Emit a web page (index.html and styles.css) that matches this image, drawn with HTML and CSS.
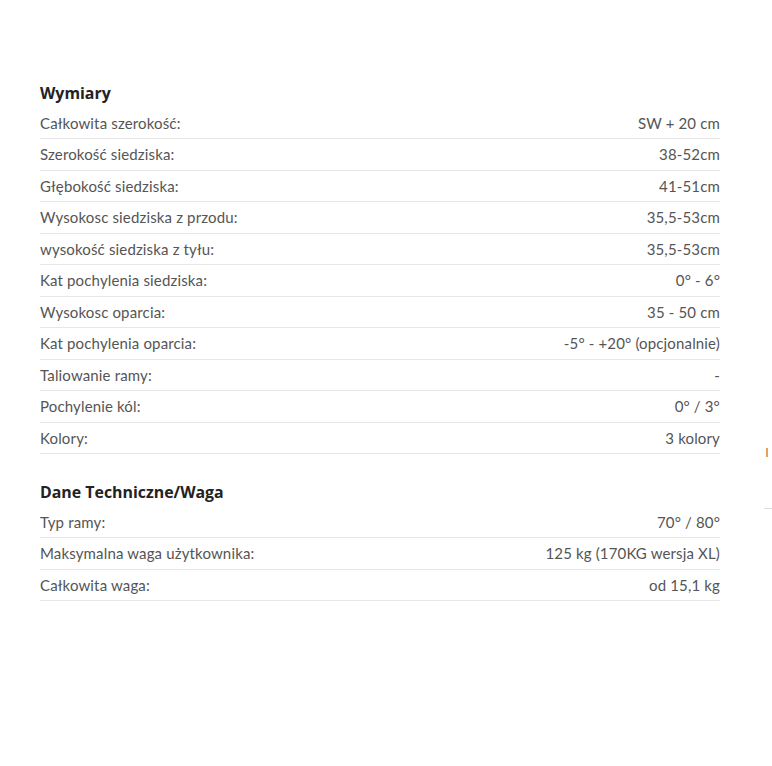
FILE: index.html
```html
<!DOCTYPE html>
<html lang="pl">
<head>
<meta charset="utf-8">
<title>Specyfikacja</title>
<link rel="stylesheet" href="styles.css">
</head>
<body>
<main class="spec">
  <section class="group">
    <h3 class="group-title">Wymiary</h3>
    <div class="row"><span>Całkowita szerokość:</span><span>SW + 20 cm</span></div>
    <div class="row"><span>Szerokość siedziska:</span><span>38-52cm</span></div>
    <div class="row"><span>Głębokość siedziska:</span><span>41-51cm</span></div>
    <div class="row"><span>Wysokosc siedziska z przodu:</span><span>35,5-53cm</span></div>
    <div class="row"><span>wysokość siedziska z tyłu:</span><span>35,5-53cm</span></div>
    <div class="row"><span>Kat pochylenia siedziska:</span><span>0° - 6°</span></div>
    <div class="row"><span>Wysokosc oparcia:</span><span>35 - 50 cm</span></div>
    <div class="row"><span>Kat pochylenia oparcia:</span><span>-5° - +20° (opcjonalnie)</span></div>
    <div class="row"><span>Taliowanie ramy:</span><span>-</span></div>
    <div class="row"><span>Pochylenie kól:</span><span>0° / 3°</span></div>
    <div class="row"><span>Kolory:</span><span>3 kolory</span></div>
  </section>
  <section class="group">
    <h3 class="group-title">Dane Techniczne/Waga</h3>
    <div class="row"><span>Typ ramy:</span><span>70° / 80°</span></div>
    <div class="row"><span>Maksymalna waga użytkownika:</span><span>125 kg (170KG wersja XL)</span></div>
    <div class="row"><span>Całkowita waga:</span><span>od 15,1 kg</span></div>
  </section>
</main>
<div class="edge-mark"></div>
<div class="edge-line"></div>
</body>
</html>
```

FILE: styles.css
```css
html, body {
  margin: 0;
  padding: 0;
  background: #fff;
}
body {
  font-family: Lato, "Noto Sans", sans-serif;
  font-size: 15px;
  color: #555;
}
.spec {
  width: 680px;
  margin: 0 0 0 40px;
  padding-top: 82px;
}
.group + .group {
  margin-top: 27px;
}
.group-title {
  margin: 0 0 3px;
  font-family: "Open Sans", Lato, sans-serif;
  font-size: 15.9px;
  line-height: 22.5px;
  font-weight: 700;
  color: #222;
}
.row {
  display: flex;
  justify-content: space-between;
  padding: 4px 0;
  line-height: 22.5px;
  letter-spacing: 0.15px;
  border-bottom: 1px solid #e6e6e6;
}
.edge-mark {
  position: absolute;
  left: 766px;
  top: 448px;
  width: 2px;
  height: 9px;
  background: #e8a060;
}
.edge-line {
  position: absolute;
  left: 764px;
  top: 508px;
  width: 8px;
  height: 1px;
  background: #ddd;
}
```
